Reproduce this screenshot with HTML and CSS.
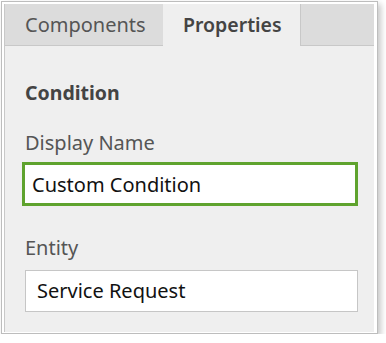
FILE: index.html
```html
<!DOCTYPE html>
<html lang="en">
<head>
    <meta charset="UTF-8">
    <title>Properties</title>
    <link rel="stylesheet" href="styles.css">
</head>
<body>
    <div class="frame">
        <div class="panel">
            <div class="tab-bar">
                <div class="tab">Components</div>
                <div class="tab active">Properties</div>
                <div class="tab-filler"></div>
            </div>

            <div class="panel-body">
                <div class="section-title">Condition</div>

                <div class="field-label">Display Name</div>
                <div class="field-box focused">Custom Condition</div>

                <div class="field-label entity">Entity</div>
                <div class="field-box">Service Request</div>
            </div>
        </div>
    </div>
</body>
</html>
```

FILE: styles.css
```css
body {
    margin: 0;
    background-color: #ffffff;
    font-family: 'Noto Sans', 'Open Sans', sans-serif;
    color: #555;
}

.frame {
    margin: 1px 0 0 1px;
    width: 370px;
    border: 1px solid #bdbdbd;
    padding: 2px 3px 1px 2px;
    background-color: #ffffff;
    box-shadow: 3px 3px 6px rgba(0, 0, 0, 0.22);
}

.panel {
    border-left: 1px solid #c8c8c8;
    background-color: #efefef;
    height: 328px;
}

/* Tabs */
.tab-bar {
    display: flex;
    height: 42px;
}

.tab {
    box-sizing: border-box;
    height: 42px;
    padding: 0 0 0 20px;
    line-height: 42px;
    font-size: 20px;
    background-color: #dcdcdc;
    border-bottom: 1px solid #c8c8c8;
    width: 158px;
}

.tab.active {
    width: 137px;
    background-color: #efefef;
    border-bottom: none;
    font-size: 19.5px;
    font-weight: 600;
    color: #444;
}

.tab-filler {
    flex: 1;
    background-color: #dcdcdc;
    border-left: 1px solid #c8c8c8;
    border-bottom: 1px solid #c8c8c8;
}

/* Form */
.panel-body {
    display: flex;
    flex-direction: column;
    align-items: flex-start;
    padding: 0 0 0 20px;
}

.section-title {
    margin-top: 34px;
    font-size: 19.5px;
    font-weight: 700;
    line-height: 26px;
    color: #444;
}

.field-label {
    margin-top: 24px;
    font-size: 20px;
    line-height: 26px;
}

.field-label.entity {
    margin-top: 29px;
}

.field-box {
    box-sizing: border-box;
    margin-top: 9px;
    width: 333px;
    height: 42px;
    padding: 0 11px;
    border: 1px solid #c6c6c6;
    background-color: #ffffff;
    font-size: 20px;
    line-height: 40px;
    color: #111;
}

.field-box.focused {
    margin-top: 6px;
    margin-left: -3px;
    width: 336px;
    height: 44px;
    padding: 1px 7px 0;
    border: 3px solid #5fa32e;
    line-height: 37px;
}
```
